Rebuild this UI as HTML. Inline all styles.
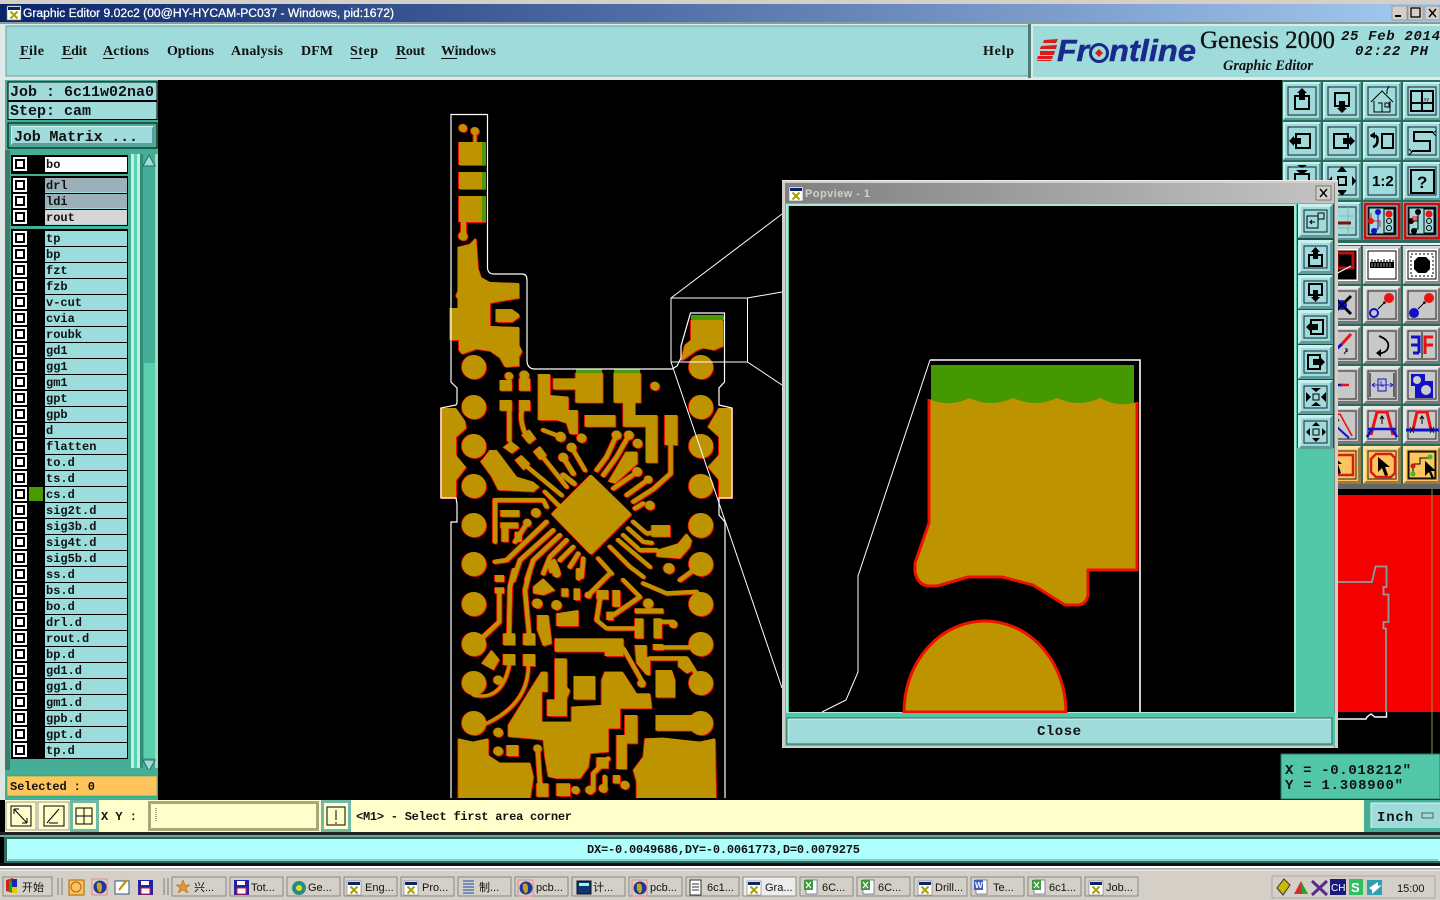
<!DOCTYPE html>
<html><head><meta charset="utf-8"><title>Graphic Editor</title>
<style>
html,body{margin:0;padding:0;background:#000;width:1440px;height:900px;overflow:hidden}
svg{display:block}
text{white-space:pre}
.m{font-family:"Liberation Mono",monospace;font-weight:bold;font-size:12px;fill:#111}
.j{font-family:"Liberation Mono",monospace;font-size:15px;fill:#111;font-weight:bold}
.s{font-family:"Liberation Serif",serif;font-weight:bold;font-size:14px;fill:#111}
.w{font-family:"Liberation Sans","Noto Sans CJK SC",sans-serif;font-size:11px;fill:#111}
.t{fill:none;stroke:#bd9300;stroke-width:12.500;stroke-linecap:round;stroke-linejoin:round}
.g{fill:#bd9300}
.k{fill:none;stroke:#000;stroke-width:2}
.k1{fill:none;stroke:#000;stroke-width:1}
</style></head><body>
<svg width="1440" height="900" viewBox="0 0 1440 900" xmlns="http://www.w3.org/2000/svg">
<defs>
<linearGradient id="tb" x1="0" x2="1"><stop offset="0" stop-color="#0a246a"/><stop offset="1" stop-color="#a6caf0"/></linearGradient>
<linearGradient id="tg" x1="0" x2="1"><stop offset="0" stop-color="#808080"/><stop offset="1" stop-color="#c4c4c4"/></linearGradient>
<filter id="o" x="-3%" y="-3%" width="106%" height="106%"><feFlood flood-color="#ee1000"/><feComposite in2="SourceAlpha" operator="in" result="r"/><feOffset in="r" dx="-1" dy="0" result="a"/><feOffset in="r" dx="1" dy="1" result="b"/><feMerge><feMergeNode in="a"/><feMergeNode in="b"/><feMergeNode in="SourceGraphic"/></feMerge></filter>
<g id="r"><rect x="13" y="-7" width="14" height="14" fill="#fff"/><rect x="15" y="-5" width="10" height="10" fill="#000"/><rect x="17" y="-3" width="6" height="6" fill="#fff"/><rect x="45" y="-7" width="82" height="15" fill="#9bdcdc"/></g>
<g id="b"><rect width="38" height="38" fill="#9fdbdb"/><path d="M0 38V0H38l-2 2H2V36z" fill="#c8f0ee"/><path d="M38 0V38H0l2-2H36V2z" fill="#5d9c98"/><rect x="5" y="5" width="28" height="28" fill="none" stroke="#123" stroke-width="1"/></g>
<g id="bw"><rect width="38" height="38" fill="#fff"/><path d="M38 0V38H0l3-3H35V3z" fill="#8a8a8a"/><path d="M0 38V0H38l-3 3H3V35z" fill="#d8d8d8"/><rect x="5" y="5" width="28" height="28" fill="none" stroke="#000"/></g>
<g id="bg"><rect width="38" height="38" fill="#c8c8c8"/><path d="M0 38V0H38l-3 3H3V35z" fill="#e8e8e8"/><path d="M38 0V38H0l3-3H35V3z" fill="#777"/><rect x="5" y="5" width="28" height="28" fill="none" stroke="#222"/></g>
<g id="bo"><rect width="38" height="38" fill="#ffc45e"/><path d="M0 38V0H38l-3 3H3V35z" fill="#ffe0a0"/><path d="M38 0V38H0l3-3H35V3z" fill="#9a7a40"/><rect x="5" y="5" width="28" height="28" fill="none" stroke="#222"/></g>
<g id="bp"><rect width="35" height="34" fill="#9fdbdb"/><path d="M0 34V0H35l-3 3H3V31z" fill="#c8f0ee"/><path d="M35 0V34H0l3-3H32V3z" fill="#5d9c98"/><rect x="6" y="6" width="23" height="22" fill="none" stroke="#123"/></g>
<g id="xi"><rect width="14" height="14" fill="#fff" stroke="#777" stroke-width=".6"/><rect x="1" y="1" width="12" height="3" fill="#0a246a"/><path d="M3.500 5.500l7 7m0-7l-7 7" stroke="#a8a000" stroke-width="2"/></g>
<g id="xl"><rect width="11" height="14" x="2" fill="#fff" stroke="#446"  stroke-width=".6"/><rect x="0" y="0" width="9" height="10" fill="#3c9a3c"/><path d="M2 2l5 6m0-6l-5 6" stroke="#fff" stroke-width="1.300"/></g>
<g id="gl"><circle cx="8" cy="8" r="6.500" fill="#1a3a9a"/><path d="M5 4q5-2 5 4t-3 5q-3-3-2-9" fill="#c9a020"/><rect x="0" y="0" width="15" height="16" fill="none" stroke="#e88" /></g>
</defs>

<!-- base -->
<rect width="1440" height="900" fill="#000"/>
<rect width="1440" height="4" fill="#d4d0c8"/>
<rect x="0" y="4" width="1440" height="18" fill="url(#tb)"/>
<rect x="0" y="22" width="1440" height="2" fill="#7f9ea0"/>
<use href="#xi" x="7" y="6"/>
<text x="23" y="17" font-family="Liberation Sans" font-size="11.500" fill="#fff" stroke="#fff" stroke-width=".25" textLength="371" lengthAdjust="spacingAndGlyphs">Graphic Editor 9.02c2 (00@HY-HYCAM-PC037 - Windows, pid:1672)</text>
<g><rect x="1392" y="6" width="15" height="14" fill="#d4d0c8" stroke="#888" stroke-width=".7"/><rect x="1395" y="15" width="6" height="2" fill="#000"/><rect x="1408" y="6" width="15" height="14" fill="#d4d0c8" stroke="#888" stroke-width=".7"/><rect x="1411" y="8" width="9" height="9" fill="none" stroke="#000" stroke-width="1.300"/><rect x="1425" y="6" width="15" height="14" fill="#d4d0c8" stroke="#888" stroke-width=".7"/><path d="M1429 9l7 8m0-8l-7 8" stroke="#000" stroke-width="1.400"/></g>

<!-- menu -->
<rect x="0" y="24" width="1440" height="56" fill="#dfe9e8"/>
<rect x="6" y="26" width="1024" height="50" fill="#9fdbdb" stroke="#6a9e9c" stroke-width="1"/>
<rect x="1028" y="24" width="3" height="54" fill="#4a7f7a"/>
<rect x="1033" y="26" width="407" height="51" fill="#9fdbdb"/>
<g class="s">
<text x="20" y="55" textLength="24">File</text><text x="62" y="55" textLength="25">Edit</text><text x="103" y="55" textLength="46">Actions</text><text x="167" y="55" textLength="47">Options</text><text x="231" y="55" textLength="52">Analysis</text><text x="301" y="55" textLength="32">DFM</text><text x="350" y="55" textLength="28">Step</text><text x="396" y="55" textLength="29">Rout</text><text x="441" y="55" textLength="55">Windows</text><text x="983" y="55" textLength="31">Help</text></g>
<path d="M19.500 58.500h11M61.500 58.500h11M103 58.500h11M350.500 58.500h11M395.500 58.500h11M441 58.500h16" stroke="#111" stroke-width="1"/>
<!-- logo -->
<path d="M1044 40l14-1-2 4h-13zM1041 46l16-1-1 4h-16zM1040 51l15 0-1 4h-14zM1038 56l15 0-1 3h-15zM1037 60l15 0-1 1-14 0z" fill="#e01818"/>
<text x="1057" y="61" font-family="Liberation Sans" font-weight="bold" font-style="italic" font-size="31" fill="#1a2a8c" stroke="#1a2a8c" stroke-width=".5" textLength="32" lengthAdjust="spacingAndGlyphs">Fr</text>
<circle cx="1099" cy="53" r="8.500" fill="none" stroke="#1a2a8c" stroke-width="3"/><path d="M1099 49l4 4-4 4-4-4z" fill="#e01818"/>
<text x="1109" y="61" font-family="Liberation Sans" font-weight="bold" font-style="italic" font-size="31" fill="#1a2a8c" stroke="#1a2a8c" stroke-width=".5" textLength="87" lengthAdjust="spacingAndGlyphs">ntline</text>
<text x="1200" y="48" font-family="Liberation Serif" font-size="25" fill="#111" stroke="#111" stroke-width=".3" textLength="135" lengthAdjust="spacingAndGlyphs">Genesis 2000</text>
<text x="1223" y="70" font-family="Liberation Serif" font-size="15" font-style="italic" font-weight="bold" fill="#111" textLength="90" lengthAdjust="spacingAndGlyphs">Graphic Editor</text>
<text x="1341" y="40" font-family="Liberation Mono" font-style="italic" font-weight="bold" font-size="14" fill="#111" textLength="99">25 Feb 2014</text>
<text x="1355" y="55" font-family="Liberation Mono" font-style="italic" font-weight="bold" font-size="14" fill="#111" textLength="73">02:22 PH</text>

<!-- PCB -->
<g filter="url(#o)">
<!-- top antenna -->
<g class="g">
<circle cx="463" cy="128" r="4"/><circle cx="475" cy="131" r="4"/><rect x="473.500" y="131" width="3" height="12"/>
<rect x="459" y="142" width="26" height="23"/><rect x="459" y="172" width="26" height="17"/><rect x="459" y="196" width="26" height="26"/>
<rect x="461" y="222" width="5" height="12"/><circle cx="463" cy="236" r="4.500"/>
<path d="M458 247L470 244 476 238 478 268 481 277 490 282 519 283V298L490 303V326L519 327V345L522 351 519 357V366L505 367 500 358 490 351 476 349 462 354 459 350V340H450V308H458V299L456 296 458 291Z"/>
<path d="M496 309H512L519 314V317L512 322H496Z"/>
<circle cx="474" cy="367" r="12"/>
<path d="M441 408H456L465 421 466 428 456 437V455L466 467 456 480V498H441Z"/>
<path d="M732 408H719L708 427 719 437V455L708 467 719 480V498H732Z"/>
<path d="M691 320H723V346L714 350 703 348 697 350 681 361 685 345 691 340Z"/>
</g>
<g class="g">
<circle cx="474" cy="407" r="12"/><circle cx="474" cy="446" r="12"/><circle cx="474" cy="486" r="12"/><circle cx="474" cy="525" r="12"/><circle cx="474" cy="564" r="12"/><circle cx="474" cy="604" r="12"/><circle cx="474" cy="644" r="12"/><circle cx="474" cy="683" r="12"/><circle cx="474" cy="723" r="12"/>
<circle cx="701" cy="367" r="12"/><circle cx="701" cy="407" r="12"/><circle cx="701" cy="446" r="12"/><circle cx="701" cy="486" r="12"/><circle cx="701" cy="525" r="12"/><circle cx="701" cy="564" r="12"/><circle cx="701" cy="604" r="12"/><circle cx="701" cy="644" r="12"/><circle cx="701" cy="683" r="12"/><circle cx="701" cy="723" r="12"/>
</g>
<path d="M591 477L629 514 591 552 554 514Z" class="g" stroke="#bd9300" stroke-width="4" stroke-linejoin="round"/>
<!-- zoom 4 -->
<g transform="translate(430 360) scale(.33333)">
<g class="g">
<rect x="210" y="60" width="35" height="32"/><circle cx="237" cy="48" r="12"/>
<rect x="268" y="55" width="32" height="37"/><circle cx="283" cy="45" r="14"/>
<rect x="210" y="120" width="35" height="32"/><rect x="268" y="120" width="32" height="32"/>
<path d="M220 262L243 243 268 262 245 280Z"/><path d="M275 225L298 208 318 235 297 252Z"/>
<path d="M325 42H360V105L415 110V150H443V222H420L410 190 380 180H325Z"/>
<path d="M370 55H437V38H518V128H437V88H370Z"/>
<path d="M552 38H632V128H615V165H682V308H648V200H580V128H552Z"/>
<circle cx="675" cy="78" r="13"/>
<rect x="465" y="165" width="91" height="35"/>
<rect x="705" y="165" width="37" height="90"/>
<circle cx="392" cy="230" r="15"/><circle cx="455" cy="234" r="14"/><circle cx="425" cy="262" r="14"/><circle cx="400" cy="292" r="14"/>
<path d="M310 275L330 258 350 285 330 300Z"/><path d="M255 300L275 285 300 310 280 330Z"/>
<path d="M152 305L165 290 180 270H200L260 350 310 365 328 380 310 395 205 390 185 350Z"/>
<circle cx="560" cy="225" r="14"/><circle cx="597" cy="225" r="14"/><circle cx="623" cy="250" r="14"/><circle cx="622" cy="335" r="14"/><circle cx="655" cy="358" r="12"/><circle cx="660" cy="436" r="14"/>
<path d="M588 275H622V310L555 370 535 365Z"/>
<rect x="212" y="450" width="56" height="20"/><rect x="212" y="487" width="53" height="18"/><rect x="215" y="505" width="20" height="40"/><rect x="255" y="515" width="20" height="30"/>
<circle cx="318" cy="458" r="14"/><circle cx="292" cy="488" r="12"/>
<rect x="665" y="495" width="55" height="35"/>
<path d="M680 570L745 550 770 520 785 540 780 560 750 595 680 590Z"/><circle cx="812" cy="497" r="36"/>
<circle cx="717" cy="625" r="16"/>
<path d="M350 610L375 595 390 630 360 640Z"/><circle cx="380" cy="640" r="12"/>
</g>
<g class="t">
<path d="M238 152V240"/><path d="M275 152Q268 190 295 240"/><path d="M340 210L392 230"/><path d="M425 262L465 330"/><path d="M400 292L430 340" stroke-width="15"/><path d="M330 280L410 380"/><path d="M280 310L395 405"/>
<path d="M345 395L385 435"/><path d="M400 345L432 370" stroke-width="16"/>
<path d="M560 225L530 290 500 330"/><path d="M597 225L560 290 520 345"/><path d="M622 335L550 385"/><path d="M655 358L590 405"/><path d="M640 430L615 445"/>
<path d="M722 255V340L672 385 610 425"/>
<path d="M195 545V420L340 420 350 440"/>
<path d="M350 485L230 600 195 605"/><path d="M370 510L270 600 250 660"/><path d="M390 525L310 600 290 660"/><path d="M410 540L360 590 340 640"/><path d="M430 560L390 600"/><path d="M445 580L420 620"/><path d="M460 595L455 650"/>
<path d="M505 595L545 640"/><path d="M540 560L600 620 640 650"/><path d="M565 540L660 620"/><path d="M580 525L630 570 680 570"/><path d="M610 485L650 520 690 515"/><path d="M595 505L640 545 665 548"/><path d="M812 615L750 660"/><path d="M292 488L255 545"/>
</g>
</g>
<!-- zoom 5 -->
<g transform="translate(430 570) scale(.33333)">
<g class="g">
<rect x="195" y="15" width="27" height="20"/><rect x="195" y="52" width="27" height="18"/>
<rect x="220" y="190" width="35" height="35"/><rect x="280" y="190" width="35" height="35"/>
<rect x="220" y="252" width="35" height="33"/><rect x="280" y="252" width="35" height="36"/>
<path d="M155 280L185 240 208 268 190 300Z"/><circle cx="205" cy="330" r="14"/>
<path d="M235 465L300 360 335 305H352V365H335V455H425V410L515 405V330L525 305H578L620 370H660L665 415H570V475H535V545L480 550 475 590 450 625H380L355 620 345 560 340 510 300 505 235 500Z"/>
<path d="M375 205H580V258H525V245H375Z"/>
<path d="M375 265H410V350L420 360 410 385V438H352V388H375Z" />
<rect x="432" y="318" width="63" height="70"/>
<path d="M678 300H725L735 330V382H678Z"/>
<rect x="678" y="435" width="122" height="47"/>
<path d="M310 50L340 25 375 60 340 75 310 70Z"/><circle cx="322" cy="100" r="15"/><circle cx="380" cy="105" r="15"/>
<rect x="395" y="55" width="20" height="25"/><rect x="432" y="55" width="18" height="35"/>
<path d="M380 130L445 120V168H380Z"/>
<path d="M322 135H355L365 220 340 228 322 180Z"/>
<path d="M85 505L130 515 175 505V555L210 578H300L310 620 300 685H85Z"/>
<path d="M645 505L700 503 810 515 855 505 858 685H620V635L610 600 640 560Z"/>
<circle cx="205" cy="487" r="14"/><circle cx="205" cy="543" r="14"/><rect x="230" y="525" width="35" height="33"/>
<circle cx="323" cy="535" r="12"/><rect x="320" y="640" width="35" height="40"/>
<rect x="380" y="640" width="40" height="38"/><circle cx="437" cy="660" r="12"/><circle cx="480" cy="660" r="13"/><rect x="500" y="562" width="35" height="33"/><circle cx="520" cy="655" r="13"/><circle cx="585" cy="645" r="13"/><rect x="550" y="615" width="20" height="25"/>
<path d="M560 495H585V435H622V520H590V597H560Z"/>
<rect x="615" y="145" width="25" height="60"/><rect x="530" y="125" width="20" height="25"/><circle cx="475" cy="75" r="10"/><rect x="548" y="60" width="22" height="50"/><rect x="500" y="60" width="35" height="28"/>
<rect x="615" y="115" width="85" height="15"/><circle cx="655" cy="100" r="15"/><rect x="672" y="145" width="23" height="60"/><circle cx="730" cy="162" r="12"/>
<path d="M615 225H650V260L660 265V315H650L620 280Z"/><rect x="670" y="222" width="30" height="18"/>
<circle cx="635" cy="340" r="12"/><path d="M745 265H770L790 300 770 310 745 290Z"/>
</g>
<g class="t">
<path d="M208 70V155L160 200"/><path d="M252 0L240 50 237 190"/><path d="M300 0L285 60 297 190"/>
<path d="M238 285Q215 395 130 375" stroke-width="9"/><path d="M295 288Q295 400 170 460" stroke-width="9"/>
<path d="M323 535L330 640"/><path d="M490 660V610L535 565"/><path d="M525 655V620"/>
<path d="M510 85L500 150 530 175H620"/><path d="M475 75L540 10"/><path d="M550 135L630 80 580 30"/><path d="M640 40L710 70 800 65"/><path d="M695 155H730"/><path d="M700 232H812"/><path d="M660 265H770L810 330"/><path d="M580 235L640 340"/>
<path d="M445 0V25"/>
</g>
</g>
</g>
<!-- greens -->
<g fill="#4a9a00"><rect x="482" y="142" width="4" height="23"/><rect x="482" y="172" width="4" height="17"/><rect x="482" y="196" width="4" height="26"/><rect x="576" y="369" width="26" height="4"/><rect x="614" y="369" width="26" height="4"/><rect x="691" y="315" width="33" height="5"/></g>
<path d="M441 408V498M732 408V498" stroke="#8a8a8a" stroke-width="1.500"/>
<rect x="158" y="798" width="1124" height="2" fill="#000"/>
<!-- board outline -->
<path d="M451 798V522H457V504L456 498 441 498V408L456 405 457 403V388L451 382V114.500H487.500V268Q488 274 494 274H522Q527 274 527 280V360Q527 369 535 369H672L677 366 681 358V346L690.500 313H724.500V382L719 388V403L719 405 732 408V498H719V515L725 522V798" fill="none" stroke="#fff" stroke-width="1.200"/>
<!-- selection -->
<path d="M671 298H747.500V362H671ZM671 298L782 214M747.500 298L782 292M747.500 362L782 385M671 362L782 688" fill="none" stroke="#fff" stroke-width="1"/>

<!-- left panel -->
<rect x="0" y="80" width="158" height="720" fill="#46ae96"/>
<rect x="0" y="80" width="5" height="720" fill="#dde6e2"/>
<rect x="5" y="150" width="5" height="622" fill="#3d7c6c"/>
<rect x="8" y="82" width="149" height="18.500" fill="#9fdbdb" stroke="#000"/>
<rect x="8" y="101.500" width="149" height="18" fill="#9fdbdb" stroke="#000"/>
<text class="j" x="10" y="96" textLength="144">Job : 6c11w02na0</text>
<text class="j" x="10" y="115" textLength="81">Step: cam</text>
<rect x="8" y="123" width="149" height="25" fill="#46ae96" stroke="#000" />
<rect x="11" y="126" width="143" height="19" fill="#9fdbdb"/><path d="M11 145V126H154l-1 1H12V144z" fill="#d8f4f2"/><path d="M154 126V145H11l2-2H152V128z" fill="#5d9c98"/>
<text class="j" x="14" y="141" textLength="124">Job Matrix ...</text>
<rect x="11" y="155" width="117" height="19" fill="#000"/>
<rect x="11" y="176" width="117" height="50" fill="#000"/>
<rect x="11" y="229" width="117" height="530" fill="#000"/>
<g><use href="#r" y="164"/><rect x="45" y="157" width="82" height="15" fill="#fff"/><use href="#r" y="185"/><rect x="45" y="178" width="82" height="14" fill="#9bb0b8"/><use href="#r" y="201"/><rect x="45" y="194" width="82" height="14" fill="#9bb0b8"/><use href="#r" y="217"/><rect x="45" y="210" width="82" height="14" fill="#d6d6d6"/>
<rect x="13" y="157" width="14" height="14" fill="#fff"/><rect x="15" y="159" width="10" height="10" fill="#000"/><rect x="17" y="161" width="6" height="6" fill="#fff"/>
<rect x="13" y="178" width="14" height="14" fill="#fff"/><rect x="15" y="180" width="10" height="10" fill="#000"/><rect x="17" y="182" width="6" height="6" fill="#fff"/>
</g>
<g class="m">
<text x="46" y="168">bo</text><text x="46" y="189">drl</text><text x="46" y="205">ldi</text><text x="46" y="221">rout</text>
</g>
<g class="m">
<g transform="translate(0 238)"><use href="#r"/><text x="46" y="4">tp</text></g>
<g transform="translate(0 254)"><use href="#r"/><text x="46" y="4">bp</text></g>
<g transform="translate(0 270)"><use href="#r"/><text x="46" y="4">fzt</text></g>
<g transform="translate(0 286)"><use href="#r"/><text x="46" y="4">fzb</text></g>
<g transform="translate(0 302)"><use href="#r"/><text x="46" y="4">v-cut</text></g>
<g transform="translate(0 318)"><use href="#r"/><text x="46" y="4">cvia</text></g>
<g transform="translate(0 334)"><use href="#r"/><text x="46" y="4">roubk</text></g>
<g transform="translate(0 350)"><use href="#r"/><text x="46" y="4">gd1</text></g>
<g transform="translate(0 366)"><use href="#r"/><text x="46" y="4">gg1</text></g>
<g transform="translate(0 382)"><use href="#r"/><text x="46" y="4">gm1</text></g>
<g transform="translate(0 398)"><use href="#r"/><text x="46" y="4">gpt</text></g>
<g transform="translate(0 414)"><use href="#r"/><text x="46" y="4">gpb</text></g>
<g transform="translate(0 430)"><use href="#r"/><text x="46" y="4">d</text></g>
<g transform="translate(0 446)"><use href="#r"/><text x="46" y="4">flatten</text></g>
<g transform="translate(0 462)"><use href="#r"/><text x="46" y="4">to.d</text></g>
<g transform="translate(0 478)"><use href="#r"/><text x="46" y="4">ts.d</text></g>
<g transform="translate(0 494)"><use href="#r"/><rect x="29" y="-7" width="14" height="14" fill="#4a9a00"/><text x="46" y="4">cs.d</text></g>
<g transform="translate(0 510)"><use href="#r"/><text x="46" y="4">sig2t.d</text></g>
<g transform="translate(0 526)"><use href="#r"/><text x="46" y="4">sig3b.d</text></g>
<g transform="translate(0 542)"><use href="#r"/><text x="46" y="4">sig4t.d</text></g>
<g transform="translate(0 558)"><use href="#r"/><text x="46" y="4">sig5b.d</text></g>
<g transform="translate(0 574)"><use href="#r"/><text x="46" y="4">ss.d</text></g>
<g transform="translate(0 590)"><use href="#r"/><text x="46" y="4">bs.d</text></g>
<g transform="translate(0 606)"><use href="#r"/><text x="46" y="4">bo.d</text></g>
<g transform="translate(0 622)"><use href="#r"/><text x="46" y="4">drl.d</text></g>
<g transform="translate(0 638)"><use href="#r"/><text x="46" y="4">rout.d</text></g>
<g transform="translate(0 654)"><use href="#r"/><text x="46" y="4">bp.d</text></g>
<g transform="translate(0 670)"><use href="#r"/><text x="46" y="4">gd1.d</text></g>
<g transform="translate(0 686)"><use href="#r"/><text x="46" y="4">gg1.d</text></g>
<g transform="translate(0 702)"><use href="#r"/><text x="46" y="4">gm1.d</text></g>
<g transform="translate(0 718)"><use href="#r"/><text x="46" y="4">gpb.d</text></g>
<g transform="translate(0 734)"><use href="#r"/><text x="46" y="4">gpt.d</text></g>
<g transform="translate(0 750)"><use href="#r"/><text x="46" y="4">tp.d</text></g>
</g>
<!-- scroll -->
<rect x="131" y="154" width="3" height="614" fill="#bfeee2"/><rect x="134" y="154" width="3" height="614" fill="#5ccfae"/><rect x="137" y="154" width="3" height="614" fill="#bfeee2"/><rect x="140" y="154" width="3" height="614" fill="#2f8f78"/>
<rect x="143" y="154" width="12" height="614" fill="#46ae96"/><rect x="144" y="363" width="11" height="395" fill="#5ccfae"/>
<rect x="155" y="154" width="3" height="614" fill="#8fe0cc"/>
<path d="M149 155L155 166H143Z" fill="#9fdbdb" stroke="#2a6a5c"/><path d="M149 771L155 760H143Z" fill="#9fdbdb" stroke="#2a6a5c"/>
<rect x="0" y="770" width="158" height="30" fill="#46ae96"/><rect x="0" y="770" width="5" height="30" fill="#dde6e2"/>
<rect x="7" y="776" width="150" height="20" fill="#ffc45e" stroke="#1a5" stroke-width=".5"/>
<text class="m" x="10" y="790" textLength="85">Selected : 0</text>

<!-- right toolbar -->
<rect x="1282" y="80" width="158" height="404" fill="#2b6b5e"/>
<rect x="1282" y="484" width="158" height="5" fill="#666"/>
<rect x="1282" y="243" width="158" height="2" fill="#e8f0f0"/>
<g>
<use href="#b" x="1283" y="82"/><use href="#b" x="1323" y="82"/><use href="#b" x="1363" y="82"/><use href="#b" x="1403" y="82"/>
<use href="#b" x="1283" y="122"/><use href="#b" x="1323" y="122"/><use href="#b" x="1363" y="122"/><use href="#b" x="1403" y="122"/>
<use href="#b" x="1283" y="162"/><use href="#b" x="1323" y="162"/><use href="#b" x="1363" y="162"/><use href="#b" x="1403" y="162"/>
<use href="#b" x="1283" y="202"/><use href="#b" x="1323" y="202"/><use href="#b" x="1363" y="202"/><use href="#b" x="1403" y="202"/>
<use href="#bw" x="1283" y="246"/><use href="#bw" x="1323" y="246"/><use href="#bw" x="1363" y="246"/><use href="#bw" x="1403" y="246"/>
<use href="#bg" x="1283" y="286"/><use href="#bg" x="1323" y="286"/><use href="#bg" x="1363" y="286"/><use href="#bg" x="1403" y="286"/>
<use href="#bg" x="1283" y="326"/><use href="#bg" x="1323" y="326"/><use href="#bg" x="1363" y="326"/><use href="#bg" x="1403" y="326"/>
<use href="#bg" x="1283" y="366"/><use href="#bg" x="1323" y="366"/><use href="#bg" x="1363" y="366"/><use href="#bg" x="1403" y="366"/>
<use href="#bg" x="1283" y="406"/><use href="#bg" x="1323" y="406"/><use href="#bg" x="1363" y="406"/><use href="#bg" x="1403" y="406"/>
<use href="#bo" x="1283" y="446"/><use href="#bo" x="1323" y="446"/><use href="#bo" x="1363" y="446"/><use href="#bo" x="1403" y="446"/>
</g>
<!-- row1 icons -->
<g transform="translate(1283 82)"><path class="k" d="M12 14H26V27H12Z"/><path d="M19 6L24 11H22V18H16V11H14Z"/></g>
<g transform="translate(1323 82)"><path class="k" d="M12 11H26V24H12Z"/><path d="M19 31L24 26H22V19H16V26H14Z"/></g>
<g transform="translate(1363 82)"><path class="k1" stroke-width="1.500" d="M8 20L19 9 30 20M11 19V30H27V19M15 21H19V30M22 21H26V25H22Z"/><path class="k1" d="M24 12V8L26 4"/></g>
<g transform="translate(1403 82)"><path class="k" d="M8 9H30V29H8ZM19 9V29M8 21H30"/><text x="21" y="19" font-size="5" font-family="Liberation Sans" fill="#000">xy</text></g>
<g transform="translate(1283 122)"><path class="k" d="M13 12H27V26H13Z"/><path d="M6 19L11 14V16H18V22H11V24Z"/></g>
<g transform="translate(1323 122)"><path class="k" d="M11 12H25V26H11Z"/><path d="M32 19L27 14V16H20V22H27V24Z"/></g>
<g transform="translate(1363 122)"><path class="k" d="M19 12H30V26H19Z"/><path d="M14 14H9L8 13M14 14Q16 23 10 25" fill="none" stroke="#000" stroke-width="2.500"/><path d="M12 10L7 13 12 17Z"/></g>
<g transform="translate(1403 122)"><path d="M30 10H11V19H27V29H9" class="k"/><path class="k1" d="M33 9L30 11 33 14M6 27L9 30 6 33"/></g>
<g transform="translate(1283 162)"><path class="k" d="M12 12H26V26H12Z"/><path d="M19 13L13 8H25Z"/><path d="M19 6L14 3H24Z"/></g>
<g transform="translate(1323 162)"><path class="k" d="M15 15H23V23H15Z"/><path d="M19 4L24 10H14ZM19 34L24 28H14ZM9 14L5 19 9 24ZM29 14L33 19 29 24Z"/></g>
<g transform="translate(1363 162)"><path class="k" d="M4 4"/><text x="9" y="24" font-family="Liberation Sans" font-weight="bold" font-size="15" fill="#000">1:2</text></g>
<g transform="translate(1403 162)"><rect x="8" y="8" width="23" height="23" class="k"/><text x="14" y="26" font-family="Liberation Sans" font-weight="bold" font-size="17" fill="#000">?</text></g>
<!-- row 4 -->
<g transform="translate(1323 202)"><path d="M5 14H33M5 26H33M13 5V33M25 5V33" stroke="#8aa" stroke-width=".8"/><path d="M0 21H28" stroke="#7a1010" stroke-width="3"/><circle cx="9" cy="21" r="5"/></g>
<g transform="translate(1363 202)"><rect x="2" y="2" width="34" height="34" fill="none" stroke="#c21010" stroke-width="3"/><rect x="6" y="6" width="26" height="26" fill="none" stroke="#000"/><circle cx="15" cy="10" r="3" fill="#11c"/><circle cx="8" cy="19" r="3" fill="#e11"/><circle cx="11" cy="29" r="3" fill="#11c"/><path d="M15 10V27H11M8 19H15" stroke="#11c" fill="none"/><path d="M8 19V11M8 19H17V25" stroke="#e11" fill="none"/><rect x="21" y="7" width="10" height="24" fill="none" stroke="#000"/><circle cx="26" cy="12" r="3.500" fill="#e11"/><circle cx="26" cy="19" r="2.500" fill="none" stroke="#000"/><circle cx="26" cy="26" r="2.500" fill="none" stroke="#000"/></g>
<g transform="translate(1403 202)"><rect x="2" y="2" width="34" height="34" fill="none" stroke="#c21010" stroke-width="3"/><rect x="6" y="6" width="26" height="26" fill="none" stroke="#000"/><circle cx="15" cy="10" r="3"/><circle cx="8" cy="19" r="3"/><circle cx="11" cy="29" r="3"/><path d="M15 10V27H11M8 19H15" stroke="#000" fill="none"/><path d="M12 14V19M14 14V19M10 14V19" stroke="#e11"/><rect x="21" y="7" width="10" height="24" fill="none" stroke="#000"/><circle cx="26" cy="12" r="3.500" fill="#e11"/><circle cx="26" cy="19" r="2.500" fill="none" stroke="#000"/><circle cx="26" cy="26" r="2.500" fill="none" stroke="#000"/></g>
<!-- row 5 -->
<g transform="translate(1323 246)"><rect x="5" y="5" width="28" height="28" fill="#000"/><rect x="14" y="7" width="16" height="15" fill="#000" stroke="#c21010" stroke-width="3"/><path d="M5 32L28 20" stroke="#fff" stroke-width="1.200"/></g>
<g transform="translate(1363 246)"><rect x="7" y="16" width="24" height="6" fill="#000"/><path d="M9 16V13M12 16V14M15 16V13M18 16V14M21 16V13M24 16V14M27 16V13M30 16V14" stroke="#000"/><path d="M9 17V21M12 17V21M15 17V21M18 17V21M21 17V21M24 17V21M27 17V21" stroke="#fff" stroke-width=".6"/></g>
<g transform="translate(1403 246)"><rect x="8" y="8" width="22" height="22" fill="none" stroke="#000" stroke-dasharray="2 2"/><path d="M15 11H23L27 15V23L23 27H15L11 23V15Z"/></g>
<!-- row 6 -->
<g transform="translate(1323 286)"><path d="M10 10L28 28M28 10L10 28" stroke="#000" stroke-width="3"/><circle cx="19" cy="19" r="5" fill="#11c"/><path d="M15 15L23 23M23 15L15 23" stroke="#000" stroke-width="1.500"/></g>
<g transform="translate(1363 286)"><circle cx="26" cy="12" r="5" fill="#e11"/><circle cx="11" cy="27" r="4" fill="none" stroke="#11c" stroke-width="2"/><path d="M15 23L22 16M20 16H22V18" stroke="#000" fill="none"/></g>
<g transform="translate(1403 286)"><circle cx="26" cy="12" r="5" fill="#e11"/><circle cx="11" cy="27" r="5" fill="#11c"/><path d="M15 23L22 16M20 16H22V18" stroke="#000" fill="none"/></g>
<!-- row 7 -->
<g transform="translate(1323 326)"><path d="M10 26L19 18" stroke="#11c" stroke-width="3"/><path d="M19 18L28 8" stroke="#e11" stroke-width="3"/><path d="M24 24L21 28M22 23H24V26" stroke="#000" fill="none"/></g>
<g transform="translate(1363 326)"><path d="M16 10Q29 15 24 24 20 28 15 27" fill="none" stroke="#000" stroke-width="1.800"/><path d="M18 23L13 27 18 31Z"/></g>
<g transform="translate(1403 326)"><path d="M19 6V32" stroke="#000"/><path d="M8 11H16V27M8 19H16M10 27H16" fill="none" stroke="#11c" stroke-width="3"/><path d="M30 11H22V28M22 19H30" fill="none" stroke="#e11" stroke-width="3"/></g>
<!-- row 8 -->
<g transform="translate(1323 366)"><path d="M6 19H20" stroke="#11c" stroke-width="2.500"/><path d="M18 19H26" stroke="#e11" stroke-width="2.500"/></g>
<g transform="translate(1363 366)"><path d="M7 7V31M31 7V31" stroke="#000"/><rect x="15" y="13" width="8" height="12" fill="none" stroke="#11c"/><path d="M9 19H30M9 19L12 17M9 19L12 21M30 19L27 17M30 19L27 21M18 15V20H21" fill="none" stroke="#11c" stroke-width=".8"/></g>
<g transform="translate(1403 366)"><path d="M8 8H22V15H30V32H12V20H8Z" fill="#11c"/><circle cx="14" cy="14" r="4" fill="#ccc"/><circle cx="23" cy="24" r="5" fill="#ccc"/></g>
<!-- row 9 -->
<g transform="translate(1323 406)"><path d="M9 10L17 8 29 30" fill="none" stroke="#e11" stroke-width="1.600"/><path d="M6 32L14 21 26 32" fill="none" stroke="#11c" stroke-width="2"/><path d="M14 18V12L12 15M14 12L16 15" stroke="#000" fill="none"/></g>
<g transform="translate(1363 406)"><path d="M8 29L14 6H24L30 29" fill="none" stroke="#e11" stroke-width="3"/><path d="M5 23H33M9 23L4 31M29 23L34 31" fill="none" stroke="#11c" stroke-width="2.600"/><path d="M19 18V10M17 13L19 10 21 13" stroke="#000" fill="none"/></g>
<g transform="translate(1403 406)"><path d="M10 24L14 6H24L28 24" fill="none" stroke="#e11" stroke-width="3"/><path d="M3 24H36" stroke="#11c" stroke-width="3"/><path d="M7 21L11 27M11 21L7 27M27 21L31 27M31 21L27 27" stroke="#000" stroke-width=".7"/><path d="M19 18V10M17 13L19 10 21 13" stroke="#000" fill="none"/></g>
<!-- row 10 -->
<g transform="translate(1323 446)"><rect x="8" y="9" width="22" height="20" fill="none" stroke="#d02010" stroke-width="2.500"/><path d="M9 9L9 22 12 19 15 28 18 27 15 18 19 18Z"/></g>
<g transform="translate(1363 446)"><path d="M13 8H28L32 12V27L28 31H13L8 26V13Z" fill="none" stroke="#d02010" stroke-width="2.500"/><path d="M15 11V26L19 22 22 30 25 29 22 21 27 21Z"/></g>
<g transform="translate(1403 446)"><rect x="6" y="6" width="26" height="26" fill="none" stroke="#000"/><path d="M10 28V18H17V12H27" fill="none" stroke="#000"/><circle cx="10" cy="20" r="2.500" fill="#c02020"/><circle cx="10" cy="28" r="2.500" fill="#30c030"/><circle cx="27" cy="11" r="2.500" fill="#30c030"/><path d="M22 15V30L26 26 29 33 31 32 28 25 33 25Z"/></g>

<!-- red area -->
<rect x="1337" y="495" width="103" height="217" fill="#f40000"/>
<path d="M1432 489V754" stroke="#8a9a30" stroke-width="1"/>
<path d="M1337 582H1372L1375.500 566.500H1386.500V587H1383.500V594.500H1388.500V622H1383.500V628.500H1386V712" fill="none" stroke="#8f9aa0" stroke-width="1.800"/>
<path d="M1386.500 712V717H1375L1371 714 1367 717 1366 719H1337" fill="none" stroke="#fff" stroke-width="1.400"/>

<!-- coord box -->
<rect x="1281" y="754" width="159" height="45" fill="#52c7a8" stroke="#2a7a68"/>
<g font-family="Liberation Mono" font-weight="bold" font-size="14" fill="#111"><text x="1285" y="774" textLength="126">X = -0.018212"</text><text x="1285" y="789" textLength="118">Y = 1.308900"</text></g>

<!-- popview -->
<rect x="782" y="180" width="556" height="568" fill="#d4d0c8"/>
<rect x="782" y="180" width="556" height="1" fill="#eee"/>
<rect x="785" y="183" width="550" height="20" fill="url(#tg)"/>
<rect x="785" y="203" width="550" height="542" fill="#52c7a8"/>
<use href="#xi" x="789" y="187"/>
<text x="805" y="197" font-family="Liberation Sans" font-weight="bold" font-size="11" fill="#d4d0c8" textLength="65">Popview - 1</text>
<rect x="1316" y="186" width="15" height="14" fill="#d4d0c8" stroke="#555" stroke-width=".7"/><path d="M1320 189l7 8m0-8l-7 8" stroke="#000" stroke-width="1.400"/>
<rect x="1335" y="203" width="3" height="545" fill="#d4d0c8"/>
<rect x="1334" y="183" width="1" height="565" fill="#888"/>
<rect x="789" y="206" width="505" height="506" fill="#000"/>
<path d="M787 205H1295V713H787Z" fill="none" stroke="#a8e8d8" stroke-width="2"/>
<rect x="1297" y="204" width="37" height="244" fill="#1f4f47"/>
<rect x="1297" y="448" width="37" height="266" fill="#52c7a8"/>
<use href="#bp" x="1298" y="204"/><use href="#bp" x="1298" y="240"/><use href="#bp" x="1298" y="275"/><use href="#bp" x="1298" y="310"/><use href="#bp" x="1298" y="345"/><use href="#bp" x="1298" y="380"/><use href="#bp" x="1298" y="415"/>
<g transform="translate(1298 204)"><rect x="9" y="12" width="11" height="12" class="k1" stroke-width="1.500"/><rect x="20" y="9" width="6" height="6" class="k1"/><path d="M17 18H12M14 16L12 18 14 20" class="k1"/></g>
<g transform="translate(1298 240)"><path class="k" d="M11 15H24V26H11Z"/><path d="M17.500 7L22 12H20V19H15V12H13Z"/></g>
<g transform="translate(1298 275)"><path class="k" d="M11 9H24V20H11Z"/><path d="M17.500 27L22 22H20V15H15V22H13Z"/></g>
<g transform="translate(1298 310)"><path class="k" d="M13 10H25V24H13Z"/><path d="M8 17L13 12V14H20V20H13V22Z"/></g>
<g transform="translate(1298 345)"><path class="k" d="M10 10H22V24H10Z"/><path d="M27 17L22 12V14H15V20H22V22Z"/></g>
<g transform="translate(1298 380)"><rect x="15" y="14" width="6" height="6" class="k1" stroke-width="1.500"/><path d="M18 12L13 8H23ZM18 22L13 26H23ZM13 17L8 12V22ZM23 17L28 12V22Z"/></g>
<g transform="translate(1298 415)"><rect x="15" y="14" width="6" height="6" class="k1" stroke-width="1.200"/><path d="M18 7L14 11H22ZM18 27L14 23H22ZM8 17L12 13V21ZM28 17L24 13V21Z"/></g>
<!-- popview contents -->
<path d="M822 712L846 700 858 672V576L930 360" fill="none" stroke="#fff" stroke-width="1"/>
<path d="M930 360H1140V712" fill="none" stroke="#fff" stroke-width="1.600"/>
<rect x="931" y="365" width="203" height="40" fill="#459900"/>
<path d="M929 399Q950 408 969 398Q991 408 1013 398Q1035 408 1057 398Q1079 408 1100 398Q1118 408 1137 402V570H1088V595Q1086 606 1075 606H1065L1033 585 1002 577H968L937 586H930Q918 586 915 572V563L929 523Z" fill="#bd9300"/>
<path d="M929 399V523L915 563V572Q918 586 930 586H937L968 577H1002L1033 585 1065 605H1075Q1086 606 1088 595V570H1137V402" fill="none" stroke="#ee1000" stroke-width="3"/>
<path d="M904 712A81 91 0 0 1 1066 712Z" fill="#bd9300" stroke="#ee1000" stroke-width="3"/>
<rect x="785" y="713" width="550" height="33" fill="#52c7a8"/>
<rect x="787" y="718" width="545" height="26" fill="#9fdbdb" stroke="#2a6a5c"/>
<path d="M788 743V719H1331" fill="none" stroke="#d8f4f2"/>
<text x="1037" y="735" font-family="Liberation Mono" font-size="14" font-weight="bold" fill="#111" textLength="44">Close</text>

<!-- bottom bar -->
<rect x="5" y="800" width="1435" height="32" fill="#ffffcc"/>
<rect x="0" y="832" width="1440" height="3" fill="#222"/>
<rect x="0" y="835" width="1440" height="2" fill="#6aa89a"/>
<g>
<rect x="6" y="802" width="30" height="28" fill="#ffffcc" stroke="#999"/><rect x="11" y="806" width="20" height="20" fill="none" stroke="#000"/><path d="M14 809L27 823M14 809V814M14 809H19M27 823V818M27 823H22" stroke="#000" fill="none"/>
<rect x="38" y="802" width="31" height="28" fill="#ffffcc" stroke="#999"/><rect x="44" y="806" width="20" height="20" fill="none" stroke="#000"/><path d="M47 823L59 809M49 823H58" stroke="#000" fill="none"/>
<rect x="70" y="800" width="29" height="32" fill="#6fb8a8"/><rect x="73" y="803" width="23" height="26" fill="#ffffcc"/><rect x="76" y="808" width="16" height="16" fill="none" stroke="#000"/><path d="M84 808V824M76 816H92" stroke="#000"/>
<text class="m" x="101" y="820" font-size="13" textLength="36">X Y :</text>
<rect x="148" y="801" width="171" height="30" fill="#aaa87a"/><rect x="151" y="804" width="165" height="24" fill="#ffffcc"/><path d="M156 808V822" stroke="#444" stroke-dasharray="1 1"/>
<rect x="321" y="800" width="30" height="32" fill="#6fb8a8"/><rect x="324" y="803" width="24" height="26" fill="#ffffcc"/><rect x="327" y="807" width="18" height="18" fill="none" stroke="#000"/><path d="M336 810V820M336 822V824" stroke="#000"/>
<text class="m" x="356" y="820" textLength="216">&lt;M1&gt; - Select first area corner</text>
<rect x="1364" y="800" width="76" height="32" fill="#46ae96"/><rect x="1371" y="803" width="69" height="25" fill="#9fdbdb"/><path d="M1371 828V803H1440" fill="none" stroke="#d8f4f2"/>
<text x="1377" y="821" font-family="Liberation Mono" font-size="14" font-weight="bold" fill="#111" textLength="36">Inch</text>
<rect x="1422" y="813" width="11" height="5" fill="#9fdbdb" stroke="#444" stroke-width=".8"/>
</g>
<rect x="4" y="837" width="1436" height="26" fill="#2b6b5e"/>
<rect x="7" y="839" width="1433" height="22" fill="#b0ffff"/>
<path d="M8 860H1438" stroke="#5d9c98"/>
<text class="m" x="587" y="853" textLength="273">DX=-0.0049686,DY=-0.0061773,D=0.0079275</text>
<rect x="0" y="863" width="1440" height="3" fill="#111"/>
<rect x="0" y="866" width="1440" height="2" fill="#fff"/>
<rect x="0" y="868" width="1440" height="32" fill="#d4d0c8"/>
<path d="M0 869H1440" stroke="#888"/><path d="M0 870H1440" stroke="#fff"/>

<!-- taskbar -->
<g fill="#d4d0c8" stroke="#777" stroke-width=".8">
<rect x="3" y="877" width="49" height="19"/>
<rect x="172" y="877" width="54" height="19"/><rect x="230" y="877" width="53" height="19"/><rect x="287" y="877" width="53" height="19"/><rect x="344" y="877" width="53" height="19"/><rect x="401" y="877" width="53" height="19"/><rect x="458" y="877" width="53" height="19"/><rect x="515" y="877" width="53" height="19"/><rect x="572" y="877" width="53" height="19"/><rect x="629" y="877" width="53" height="19"/><rect x="686" y="877" width="53" height="19"/>
<rect x="743" y="877" width="53" height="19" fill="#ececec"/><rect x="800" y="877" width="53" height="19"/><rect x="857" y="877" width="53" height="19"/><rect x="914" y="877" width="53" height="19"/><rect x="971" y="877" width="53" height="19"/><rect x="1028" y="877" width="53" height="19"/><rect x="1085" y="877" width="53" height="19"/>
</g>
<path d="M6 880l7-2v15l-7-2z" fill="#c22"/><path d="M9 880l5 3-1 8-4 1z" fill="#1a1"/><path d="M12 879h5v8h-5z" fill="#22a"/><path d="M12 887h5v6h-5z" fill="#dc0"/>
<text class="w" x="22" y="891" font-size="12">开始</text>
<path d="M58 878V895M62 878V895M164 878V895M168 878V895" stroke="#999" stroke-width="1.500"/>
<rect x="69" y="880" width="15" height="15" fill="#ffc060" stroke="#a60"/><circle cx="76" cy="887" r="5" fill="none" stroke="#a60"/>
<use href="#gl" x="92" y="879"/>
<rect x="115" y="881" width="14" height="13" fill="#fff" stroke="#357"/><path d="M119 890L127 880" stroke="#b80" stroke-width="2"/>
<rect x="138" y="880" width="15" height="15" fill="#22a"/><rect x="141" y="888" width="9" height="6" fill="#fff" stroke="#e11"/><rect x="141" y="881" width="8" height="4" fill="#fff"/>
<path d="M183 880l2 5 5 0-4 3 2 5-5-3-5 3 2-5-4-3 5 0z" fill="#e89030" stroke="#a60" stroke-width=".5"/>
<rect x="234" y="880" width="15" height="15" fill="#22a"/><rect x="237" y="888" width="9" height="6" fill="#fff" stroke="#e11"/><rect x="237" y="881" width="8" height="4" fill="#fff"/>
<circle cx="299" cy="888" r="7" fill="#2a8a80"/><circle cx="299" cy="888" r="3" fill="#dd2"/>
<use href="#xi" x="347" y="881"/><use href="#xi" x="404" y="881"/>
<path d="M463 881H474M463 884H474M463 887H474M463 890H474M463 893H474" stroke="#3a6ab0" stroke-width="1.300"/>
<use href="#gl" x="518" y="880"/>
<rect x="577" y="881" width="14" height="13" fill="#137" stroke="#111"/><rect x="579" y="883" width="10" height="3" fill="#8fd"/>
<use href="#gl" x="632" y="880"/>
<rect x="690" y="880" width="11" height="15" fill="#fff" stroke="#333"/><path d="M692 884H699M692 887H699M692 890H699" stroke="#333"/>
<use href="#xi" x="747" y="881"/><use href="#xl" x="804" y="880"/><use href="#xl" x="861" y="880"/><use href="#xi" x="918" y="881"/>
<g transform="translate(974 880)"><rect x="2" width="11" height="14" fill="#fff" stroke="#446" stroke-width=".6"/><rect width="9" height="10" fill="#3d5ec0"/><text x="1" y="8" font-size="8" font-family="Liberation Sans" font-weight="bold" fill="#fff">W</text></g>
<use href="#xl" x="1032" y="880"/><use href="#xi" x="1089" y="881"/>
<g class="w">
<text x="194" y="891">兴...</text><text x="251" y="891">Tot...</text><text x="308" y="891">Ge...</text><text x="365" y="891">Eng...</text><text x="422" y="891">Pro...</text><text x="479" y="891">制...</text><text x="536" y="891">pcb...</text><text x="593" y="891">计...</text><text x="650" y="891">pcb...</text><text x="707" y="891">6c1...</text><text x="765" y="891">Gra...</text><text x="822" y="891">6C...</text><text x="878" y="891">6C...</text><text x="935" y="891">Drill...</text><text x="993" y="891">Te...</text><text x="1049" y="891">6c1...</text><text x="1106" y="891">Job...</text>
</g>
<rect x="1272" y="876" width="163" height="22" fill="#d4d0c8" stroke="#999" stroke-width=".7"/>
<path d="M1277 888L1284 879 1290 885 1283 895Z" fill="#cbb800" stroke="#333"/>
<path d="M1294 894L1301 881 1305 894Z" fill="#d03030"/><path d="M1301 881L1308 894H1302Z" fill="#30a030"/>
<path d="M1312 881L1327 895M1327 881L1312 895" stroke="#5a2a8a" stroke-width="3"/>
<rect x="1330" y="879" width="16" height="16" fill="#1a1a7a"/><text x="1331" y="891" font-family="Liberation Sans" font-size="10" fill="#fff">CH</text>
<rect x="1349" y="879" width="14" height="16" fill="#30c060"/><text x="1351" y="892" font-family="Liberation Sans" font-weight="bold" font-size="13" fill="#fff">S</text>
<rect x="1367" y="880" width="15" height="15" fill="#30a0b0"/><path d="M1369 888L1378 882V886L1382 885 1372 894V890Z" fill="#fff"/>
<text class="w" x="1397" y="892">15:00</text>
</svg>
</body></html>
